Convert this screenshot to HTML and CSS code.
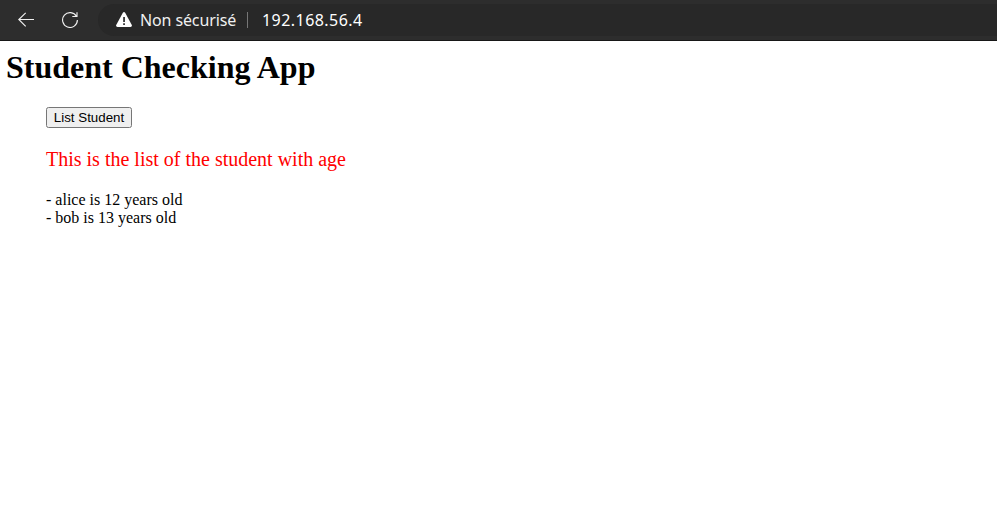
FILE: index.html
```html
<!DOCTYPE html>
<html lang="fr">
<head>
<meta charset="utf-8">
<title>Student Checking App</title>
<link rel="stylesheet" href="styles.css">
</head>
<body>
<header class="toolbar">
  <svg class="back" width="16" height="16" viewBox="0 0 16 16"><path d="M16 7.5H.8M7.7.8.8 7.5l6.9 6.8"/></svg>
  <svg class="reload" width="16" height="16" viewBox="0 0 16 16"><path d="M14.5 4.5A7.4 7.4 0 1 0 15.4 8M15 .3V4.5H10.3"/></svg>
  <div class="address">
    <svg class="warning" width="16" height="16" viewBox="0 0 16 16"><path fill="#fff" d="M6.7.9Q8-.9 9.3.9L15.8 13Q16.4 15 14.5 15h-13Q-.4 15 .2 13Z"/><path fill="#282828" d="M7.2 5h1.7v5H7.2zM7.2 11.2h1.7v1.7H7.2z"/></svg>
    <span class="security">Non sécurisé</span>
    <span class="divider"></span>
    <span class="url">192.168.56.4</span>
  </div>
</header>
<main class="page">
  <h1 class="title">Student Checking App</h1>
  <div class="content">
    <button class="list-button" type="button">List Student</button>
    <p class="caption">This is the list of the student with age</p>
    <p class="students">- alice is 12 years old<br>- bob is 13 years old</p>
  </div>
</main>
</body>
</html>
```
FILE: styles.css
```css
body {
  margin: 0;
  background: #fff;
  color: #000;
  font-family: "Liberation Serif", serif;
}
.toolbar {
  display: flex;
  align-items: center;
  box-sizing: border-box;
  height: 41px;
  padding-left: 18px;
  background: #2d2d2d;
  border-bottom: 1px solid #171717;
}
.back,
.reload {
  flex: none;
  fill: none;
  stroke: #f0f0f0;
  stroke-width: 1.15;
}
.reload {
  margin-left: 28px;
}
.address {
  display: flex;
  align-items: center;
  flex: 1;
  box-sizing: border-box;
  height: 32px;
  margin-left: 20px;
  padding-left: 18px;
  border-radius: 16px 0 0 16px;
  background: #282828;
  color: #f0f0f0;
  font: 16px/24px "Noto Sans", sans-serif;
  white-space: nowrap;
}
.warning {
  flex: none;
}
.security {
  width: 107px;
  margin-left: 8px;
  letter-spacing: -0.12px;
}
.divider {
  width: 1px;
  height: 16px;
  background: #777;
}
.url {
  margin-left: 14px;
  color: #fff;
  letter-spacing: 0.45px;
}
.page {
  padding: 8px 6px;
}
.title {
  margin: 0 0 21px;
  font-size: 32px;
  line-height: 37px;
}
.content {
  margin-left: 40px;
}
.list-button {
  display: block;
  box-sizing: border-box;
  width: 86px;
  height: 21px;
  padding: 0;
  border: 1px solid #767676;
  border-radius: 2.5px;
  background: #efefef;
  color: #000;
  font: 13.333px "Liberation Sans", sans-serif;
}
.caption {
  margin: 20px 0;
  color: #f00;
  font-size: 20px;
  line-height: 23px;
}
.students {
  margin: 0;
  font-size: 16px;
  line-height: 18px;
}
```
